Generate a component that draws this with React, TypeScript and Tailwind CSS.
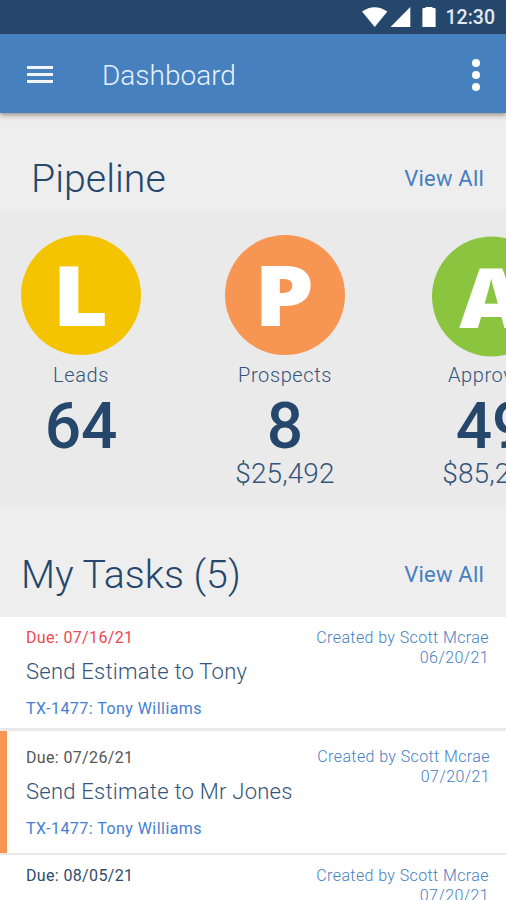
import clsx from 'clsx'

type Stage = {
  letter: string
  label: string
  count: string
  amount?: string
  circle: string
  glyph: string
  offset?: string
}

type Task = {
  due: string
  dueColor: string
  title: string
  contact: string
  created: string
  row: string
  meta: string
  active?: boolean
}

const stages: Stage[] = [
  { letter: 'L', label: 'Leads', count: '64', circle: 'bg-[#f5c400]', glyph: 'scale-x-[1.16]' },
  {
    letter: 'P',
    label: 'Prospects',
    count: '8',
    amount: '$25,492',
    circle: 'bg-[#f79552]',
    glyph: 'scale-x-[1.14]',
  },
  {
    letter: 'A',
    label: 'Approved',
    count: '49',
    amount: '$85,219',
    circle: 'bg-[#8bc53f] translate-y-[1.5px]',
    glyph: 'scale-x-[1.06]',
    offset: 'ml-[3px]',
  },
]

const tasks: Task[] = [
  {
    due: '07/16/21',
    dueColor: 'text-[#ea4a50]',
    title: 'Send Estimate to Tony',
    contact: 'TX-1477: Tony Williams',
    created: '06/20/21',
    row: 'h-[114px] pt-[11px] border-b-[3px]',
    meta: 'mr-[17px]',
  },
  {
    due: '07/26/21',
    dueColor: 'text-[#555555]',
    title: 'Send Estimate to Mr Jones',
    contact: 'TX-1477: Tony Williams',
    created: '07/20/21',
    row: 'h-[124px] pt-[17px] border-b-2',
    meta: 'mr-[16px] -mt-px',
    active: true,
  },
  {
    due: '08/05/21',
    dueColor: 'text-[#2f4b6d]',
    title: 'Send Estimate to Tony',
    contact: 'TX-1477: Tony Williams',
    created: '07/20/21',
    row: 'h-[124px] pt-[11px] border-b-2',
    meta: 'mr-[17px]',
  },
]

function StatusBar() {
  return (
    <div className="flex h-[34px] shrink-0 items-center justify-end bg-[#24476b] pr-[11px] text-white">
      <svg width="80" height="22" viewBox="0 0 80 22" fill="currentColor">
        <path d="M1 5.6Q13.7 -3 26.4 5.6L13.7 21Z" />
        <path d="M49.3 1V21H29.5Z" />
        <path d="M64.5 2V1H71.5V2H73.4Q74.6 2 74.6 3.2V21H61.4V3.2Q61.4 2 62.6 2Z" />
      </svg>
      <span className="w-[54px] whitespace-nowrap pt-[2px] text-right text-[19.5px] font-medium leading-[32px] text-[#e3e9f0]">
        12:30
      </span>
    </div>
  )
}

function AppBar() {
  return (
    <header className="relative z-10 flex h-[79px] shrink-0 items-center bg-[#4680bf] pl-[27px] pr-[26px] pt-[2px] text-white shadow-[0_2px_5px_rgba(90,70,60,0.6)]">
      <button className="-mt-px flex w-[26px] flex-col gap-[4px]" aria-label="Menu">
        <span className="h-[3px] w-full bg-[#f2f6fc]" />
        <span className="h-[3px] w-full bg-[#f2f6fc]" />
        <span className="h-[3px] w-full bg-[#f2f6fc]" />
      </button>
      <h1 className="ml-[49px] mt-[2px] flex-1 text-[28px] font-light leading-[32px] text-[#e6f1fd]">
        Dashboard
      </h1>
      <button className="flex flex-col gap-[4px]" aria-label="More">
        <span className="size-2 rounded-full bg-white" />
        <span className="size-2 rounded-full bg-white" />
        <span className="size-2 rounded-full bg-white" />
      </button>
    </header>
  )
}

function SectionHeader({ title, className }: { title: string; className: string }) {
  return (
    <div className={clsx('flex shrink-0 items-center justify-between pr-[22px]', className)}>
      <h2 className="text-[39.3px] font-light leading-[48px] text-[#24476b]">{title}</h2>
      <a className="text-[22px] leading-[28px] tracking-[0.2px] text-[#4680bf]">View All</a>
    </div>
  )
}

function StageItem({ stage }: { stage: Stage }) {
  return (
    <div className={clsx('flex w-[120px] shrink-0 flex-col items-center text-[#24476b]', stage.offset)}>
      <div
        className={clsx(
          "flex size-[120px] items-center justify-center rounded-full font-['Open_Sans'] text-[83px] font-extrabold leading-none text-white",
          stage.circle
        )}
      >
        <span className={clsx('-translate-x-px -translate-y-[2px]', stage.glyph)}>{stage.letter}</span>
      </div>
      <span className="mt-px text-[20px] font-light leading-[39px] tracking-[0.6px] text-[#34557a]">
        {stage.label}
      </span>
      <span className="text-[64px] font-medium leading-[63px]">{stage.count}</span>
      {stage.amount && (
        <span className="mt-px text-[28px] font-light leading-[30px] tracking-[0.1px] text-[#34557a]">
          {stage.amount}
        </span>
      )}
    </div>
  )
}

function TaskRow({ task }: { task: Task }) {
  return (
    <div
      className={clsx(
        'relative flex shrink-0 items-start justify-between border-[#e9e9e9] bg-white pl-[26px]',
        task.row
      )}
    >
      {task.active && <span className="absolute inset-y-0 left-0 w-[7px] bg-[#f79552]" />}
      <div className="flex flex-col">
        <span className={clsx('text-[16px] leading-[20px] tracking-[0.35px]', task.dueColor)}>
          Due: {task.due}
        </span>
        <span className="mt-[9px] text-[22px] font-light leading-[30px] tracking-[0.25px] text-[#34557a]">
          {task.title}
        </span>
        <span className="mt-[12px] text-[16px] leading-[20px] tracking-[0.45px] text-[#4680cf]">
          {task.contact}
        </span>
      </div>
      <div
        className={clsx(
          'flex flex-col items-end text-[16px] font-light leading-[20px] tracking-[0.4px] text-[#4680bf]',
          task.meta
        )}
      >
        <span>Created by Scott Mcrae</span>
        <span>{task.created}</span>
      </div>
    </div>
  )
}

export default function App() {
  return (
    <div className="flex h-[900px] w-[506px] flex-col overflow-hidden bg-[#eeeeee] font-['Roboto',sans-serif]">
      <StatusBar />
      <AppBar />
      <SectionHeader title="Pipeline" className="h-[98px] pl-[31px] pt-[34px]" />
      <div className="flex h-[296px] shrink-0 gap-[84px] overflow-hidden bg-[#eaeaea] pl-[21px] pt-[24px]">
        {stages.map((stage) => (
          <StageItem key={stage.letter} stage={stage} />
        ))}
      </div>
      <SectionHeader title="My Tasks (5)" className="h-[110px] pl-[21px] pt-[26px]" />
      {tasks.map((task) => (
        <TaskRow key={task.due} task={task} />
      ))}
    </div>
  )
}
